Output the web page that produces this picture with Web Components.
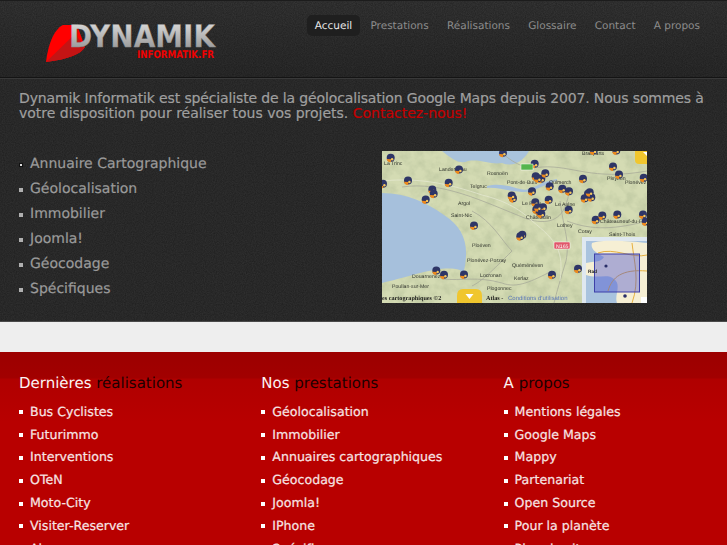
<!DOCTYPE html>
<html lang="fr">
<head>
<meta charset="utf-8">
<title>Dynamik Informatik</title>
<style>
  html, body { margin: 0; padding: 0; height: 100%; overflow: hidden; }
  body { background: #eeeeee; font-family: "DejaVu Sans", sans-serif; text-rendering: geometricPrecision; }
</style>
</head>
<body>

<site-header>
  <nav-link current>Accueil</nav-link>
  <nav-link>Prestations</nav-link>
  <nav-link>Réalisations</nav-link>
  <nav-link>Glossaire</nav-link>
  <nav-link>Contact</nav-link>
  <nav-link>A propos</nav-link>
</site-header>

<hero-panel>
  <span slot="intro">Dynamik Informatik est spécialiste de la géolocalisation Google Maps depuis 2007. Nous sommes à<br><span style="letter-spacing:-.01px">votre disposition pour réaliser tous vos projets. <a style="color:#c40000;text-decoration:none" href="#">Contactez-nous!</a></span></span>
  <bullet-item tone="dark" dim>Annuaire Cartographique</bullet-item>
  <bullet-item tone="dark">Géolocalisation</bullet-item>
  <bullet-item tone="dark">Immobilier</bullet-item>
  <bullet-item tone="dark">Joomla!</bullet-item>
  <bullet-item tone="dark">Géocodage</bullet-item>
  <bullet-item tone="dark">Spécifiques</bullet-item>
  <map-preview slot="map"></map-preview>
</hero-panel>

<site-footer>
  <footer-column first="Dernières" rest="réalisations">
    <bullet-item>Bus Cyclistes</bullet-item>
    <bullet-item>Futurimmo</bullet-item>
    <bullet-item>Interventions</bullet-item>
    <bullet-item>OTeN</bullet-item>
    <bullet-item>Moto-City</bullet-item>
    <bullet-item>Visiter-Reserver</bullet-item>
    <bullet-item>Alarme</bullet-item>
  </footer-column>
  <footer-column first="Nos" rest="prestations">
    <bullet-item>Géolocalisation</bullet-item>
    <bullet-item>Immobilier</bullet-item>
    <bullet-item>Annuaires cartographiques</bullet-item>
    <bullet-item>Géocodage</bullet-item>
    <bullet-item>Joomla!</bullet-item>
    <bullet-item>IPhone</bullet-item>
    <bullet-item>Spécifiques</bullet-item>
  </footer-column>
  <footer-column first="A" rest="propos">
    <bullet-item>Mentions légales</bullet-item>
    <bullet-item>Google Maps</bullet-item>
    <bullet-item>Mappy</bullet-item>
    <bullet-item>Partenariat</bullet-item>
    <bullet-item>Open Source</bullet-item>
    <bullet-item>Pour la planète</bullet-item>
    <bullet-item>Plan du site</bullet-item>
  </footer-column>
</site-footer>

<script>
// grain of the dark panels, vector only
const NOISE = `url("data:image/svg+xml,%3Csvg xmlns='http://www.w3.org/2000/svg' width='200' height='200'%3E%3Cfilter id='n'%3E%3CfeTurbulence type='fractalNoise' baseFrequency='.9' numOctaves='2'/%3E%3CfeColorMatrix values='0 0 0 0 0 0 0 0 0 0 0 0 0 0 0 0 0 0 .45 -.1'/%3E%3C/filter%3E%3Crect width='200' height='200' filter='url(%23n)'/%3E%3C/svg%3E")`;

class SiteHeader extends HTMLElement {
  constructor() {
    super();
    this.attachShadow({mode: "open"});
  }
  connectedCallback() {
    this.shadowRoot.innerHTML = `
    <style>
      :host {
        display: flex;
        justify-content: space-between;
        height: 78px;
        box-sizing: border-box;
        border-top: 1px solid #1c1c1c;
        border-bottom: 1px solid #141414;
        background: ${NOISE}, linear-gradient(#343434, #2a2a2a);
      }
      .logo { margin: 17px 0 0 45px; }
      nav { display: flex; align-items: flex-start; gap: 2.200px; padding: 14px 19px 0 0; }
    </style>
    <div class="logo">
      <svg width="172" height="47" viewBox="0 0 172 47">
        <defs>
          <linearGradient id="metal" x1="0" y1="0" x2="0" y2="1">
            <stop offset="0" stop-color="#e2e2e2"/>
            <stop offset="1" stop-color="#8c8c8c"/>
          </linearGradient>
        </defs>
        <path d="M1 44 C3 28 8 12 18 7 L32 7 L40 29 C36 36 24 41 1 44 Z" fill="#ff0000"/>
        <path d="M1 44 L30 16 L40 29 C36 36 24 41 1 44 Z" fill="#c41414"/>
        <text x="24" y="28.500" font-family="'DejaVu Sans', sans-serif" font-weight="700" font-size="31" textLength="146" lengthAdjust="spacingAndGlyphs" fill="url(#metal)" stroke="#8a8a8a" stroke-width=".3">DYNAMIK</text>
        <text x="92" y="40" font-family="'DejaVu Sans', sans-serif" font-weight="700" font-size="10.500" textLength="77" lengthAdjust="spacingAndGlyphs" fill="#f00000">INFORMATIK.FR</text>
      </svg>
    </div>
    <nav><slot></slot></nav>`;
  }
}
customElements.define("site-header", SiteHeader);

class NavLink extends HTMLElement {
  constructor() {
    super();
    this.attachShadow({mode: "open"});
    this.shadowRoot.innerHTML = `
    <style>
      :host {
        display: block;
        padding: 0 8px;
        height: 21px;
        line-height: 23px;
        font-size: 10.5px;
        color: #8c8c8c;
        border-radius: 5px;
      }
      :host([current]) { background: #1f1f1f; color: #e8e8e8; }
    </style>
    <slot></slot>`;
  }
}
customElements.define("nav-link", NavLink);

class BulletItem extends HTMLElement {
  constructor() {
    super();
    this.attachShadow({mode: "open"});
    this.shadowRoot.innerHTML = `
    <style>
      :host {
        display: flex;
        align-items: center;
        height: 22.800px;
        font-size: 12.6px;
        color: #f7e4e4;
        -webkit-text-stroke: .2px;
      }
      :host([tone="dark"]) { height: 25px; font-size: 14px; color: #9a9a9a; }
      i { width: 4px; height: 4px; margin: 2px 7px 0 0; background: #fff; flex: none; }
      :host([tone="dark"]) i { background: #b0b0b0; }
      :host([dim]) i { width: 2px; height: 2px; margin: 2px 8px 0 1px; background: #ddd; box-shadow: 0 0 0 1px #111; }
    </style>
    <i></i><span><slot></slot></span>`;
  }
}
customElements.define("bullet-item", BulletItem);

class HeroPanel extends HTMLElement {
  constructor() {
    super();
    this.attachShadow({mode: "open"});
    this.shadowRoot.innerHTML = `
    <style>
      :host {
        display: block;
        height: 244px;
        box-sizing: border-box;
        padding: 12px 19px 0;
        background: ${NOISE}, #2e2e2e;
        border-top: 1px solid #383838;
        border-bottom: 1px solid #4a4a4a;
      }
      p { margin: 0; font-size: 14px; line-height: 15px; color: #9f9f9f; letter-spacing: -.14px; white-space: nowrap; -webkit-text-stroke: .2px; text-rendering: auto; }
      .cols { display: grid; grid-template-columns: 363px 265px; margin-top: 30px; }
    </style>
    <p><slot name="intro"></slot></p>
    <div class="cols">
      <div><slot></slot></div>
      <slot name="map"></slot>
    </div>`;
  }
}
customElements.define("hero-panel", HeroPanel);

class MapPreview extends HTMLElement {
  constructor() {
    super();
    this.attachShadow({mode: "open"});
  }
  connectedCallback() {
    // positions read off the reference, in 3x zoom coordinates
    const pins = [[63,57],[400,42],[115,125],[237,132],[268,92],[188,152],[192,165],[168,182],[40,135],[430,178],[426,170],[313,260],[458,288],[452,292],[495,75],[498,112],[515,120],[527,103],[505,118],[487,157],[540,142],[578,150],[598,157],[537,183],[497,190],[597,213],[500,212],[510,220],[520,205],[515,225],[505,205],[640,120],[730,83],[748,107],[822,117],[655,165],[645,178],[665,175],[660,160],[678,243],[698,230],[743,227],[820,227],[828,248],[200,395],[223,408],[283,407],[547,408],[625,390],[672,35],[740,35]];
    const x = v => ((v - 37) / 3).toFixed(1), y = v => ((v - 35) / 3).toFixed(1);
    const pinSvg = pins.map(p => `<g transform="translate(${x(p[0])} ${y(p[1])})"><circle r="4" cy="-.5" fill="#2e3566"/><path d="M-4 .8 A4 4 0 0 0 0 4 L.5 1 Z" fill="#ee8a1e"/><circle r="1.200" cx="1.400" cy="1" fill="#f4c860"/></g>`).join("");
    const labels = [["La Trinc",2,14],["Landerneau",57,20],["Rosnoën",105,24],["Pont-de-Buis",125,33],["Quimerch",167,33],["Telgruc",88,37],["Argol",76,54],["Saint-Nic",69,66],["Lothey",175,76],["Le Faou",140,54],["Le Aulne",173,55],["Châteaulin",144,68],["Ploéven",90,96],["Plonévez-Porzay",85,111],["Quéménéven",130,116],["Locronan",98,126],["Kerlaz",132,129],["Plogonnec",105,139],["Douarnenez",30,127],["Poullan-sur-Mer",10,137],["Brasparts",200,4],["Pleyben",225,29],["Châteauneuf-du-F",218,72],["Saint-Thois",227,85],["Coray",196,82],["Plonévez",243,33]];
    const labelSvg = labels.map(l => `<text x="${l[1]}" y="${l[2]}">${l[0]}</text>`).join("");
    this.shadowRoot.innerHTML = `
    <style>
      :host { display: block; width: 265px; height: 152px; }
      svg { display: block; }
      .labels { font: 5.200px "Liberation Sans", sans-serif; fill: #30342c; }
      .copy { font: 700 6.200px "Liberation Serif", serif; fill: #232320; }
    </style>
    <svg width="265" height="152" viewBox="0 0 265 152">
      <defs>
        <filter id="soft" x="0" y="0" width="100%" height="100%"><feGaussianBlur stdDeviation=".4"/></filter>
        <filter id="relief" x="0" y="0" width="100%" height="100%">
          <feTurbulence type="fractalNoise" baseFrequency=".09" numOctaves="4" seed="7"/>
          <feColorMatrix values="0 0 0 0 .52  0 0 0 0 .58  0 0 0 0 .36  1.800 0 0 0 -.66"/>
        </filter>
      </defs>
      <g filter="url(#soft)">
        <rect width="265" height="152" fill="#d4dbb3"/>
        <rect width="265" height="152" filter="url(#relief)"/>
        <!-- coast and sea -->
        <path d="M0 42 C25 42 45 52 62 64 C78 74 85 88 84 105 C83 120 80 130 78 119 C60 114 40 122 0 132 Z" fill="#a6c0dc"/>
        <path d="M60 0 C70 8 78 14 86 10 C100 8 108 14 120 12 C130 16 140 12 147 0 Z" fill="#a9c3dc"/>
        <path d="M105 35 C125 30 140 42 146 38 C155 36 160 30 175 28 L175 30 C160 34 150 42 140 41 C125 40 115 36 105 37 Z" fill="#a6c0dc"/>
        <!-- roads -->
        <g fill="none" stroke="#a8ab99" stroke-width=".8">
          <path d="M120 2 C135 15 145 18 160 16 C190 14 210 30 265 20"/>
          <path d="M20 36 C60 30 100 50 145 68 C165 74 180 70 185 50 C190 38 180 28 170 30"/>
          <path d="M178 50 C182 80 188 90 184 110 C178 130 175 140 172 152"/>
          <path d="M90 60 C110 70 120 90 130 100 C110 120 100 130 90 135"/>
          <path d="M60 128 C80 130 95 125 120 132 C135 138 150 130 170 120"/>
          <path d="M185 70 C210 80 235 78 265 70"/>
        </g>
        <g fill="none" stroke="#e6e9d4" stroke-width=".7">
          <path d="M0 30 C40 26 70 34 100 44 C125 50 140 60 150 70"/>
          <path d="M150 70 C175 90 182 100 178 130"/>
        </g>
        <g class="labels">${labelSvg}</g>
        ${pinSvg}
        <!-- road signs -->
        <rect x="139" y="13" width="12" height="6" fill="#55b54d" stroke="#fff" stroke-width=".5"/>
        <rect x="172" y="91" width="16" height="7" rx="1" fill="#e0566a" stroke="#fff" stroke-width=".5"/>
        <text x="174" y="96.600" font-family="Liberation Sans, sans-serif" font-size="5.200" fill="#fff">N165</text>
        <!-- yellow tabs -->
        <path d="M253 0 H265 V13 H257 Q253 13 253 9 Z" fill="#f0c62e"/>
        <path d="M261 1 L265 1 L265 5 Z" fill="#fff"/>
        <path d="M75 152 V145 Q75 138 81 138 H94 Q100 138 100 145 V152 Z" fill="#f0c62e"/>
        <path d="M83.500 143 H91.500 L87.500 148 Z" fill="#fff"/>
        <!-- overview inset -->
        <g>
          <rect x="200" y="86" width="65" height="66" fill="#dfe8f0"/>
          <rect x="204" y="90" width="61" height="62" fill="#a9c3de"/>
          <path d="M210 92 C220 88 250 90 265 92 V152 H235 C232 144 240 134 232 128 C226 122 216 128 204 124 V112 C212 110 218 112 222 106 C214 102 208 98 210 92 Z" fill="#f6efd4"/>
          <path d="M216 102 C232 96 250 108 265 104 M226 140 C230 126 240 118 265 120 M250 92 C252 110 258 130 250 152" fill="none" stroke="#e6b040" stroke-width="1"/>
          <rect x="212.500" y="103" width="45" height="38" fill="#4a50d0" fill-opacity=".42" stroke="#3c3fa8" stroke-width="1"/>
          <circle cx="224" cy="115" r="1.600" fill="#2a2f68"/>
          <circle cx="243" cy="145" r="1.800" fill="#2a2f68"/>
          <text x="206" y="122" font-family="Liberation Sans, sans-serif" font-size="4.800" font-weight="700" fill="#222">Rad</text>
          <rect x="259" y="146" width="6" height="6" fill="#fff"/>
        </g>
        <text class="copy" x="0" y="149">es cartographiques ©2</text>
        <text class="copy" x="104" y="149">Atlas -</text>
        <text x="126" y="149" font-family="Liberation Sans, sans-serif" font-size="6" fill="#5b78b8">Conditions d'utilisation</text>
      </g>
    </svg>`;
  }
}
customElements.define("map-preview", MapPreview);

class SiteFooter extends HTMLElement {
  constructor() {
    super();
    this.attachShadow({mode: "open"});
    this.shadowRoot.innerHTML = `
    <style>
      :host {
        display: grid;
        grid-template-columns: repeat(3, 242.300px);
        margin-top: 30px;
        padding: 22px 0 0 19px;
        height: 300px;
        box-sizing: border-box;
        background: linear-gradient(#9c0000 0, #a20000 26px, #b00000 27px, #b80000 70px);
      }
    </style>
    <slot></slot>`;
  }
}
customElements.define("site-footer", SiteFooter);

class FooterColumn extends HTMLElement {
  constructor() {
    super();
    this.attachShadow({mode: "open"});
  }
  connectedCallback() {
    this.shadowRoot.innerHTML = `
    <style>
      :host { display: block; }
      h3 { margin: 0 0 8px; font-size: 15px; line-height: 18px; font-weight: 400; color: #fbf4f4; }
      h3 span { color: #1c0000; }
    </style>
    <h3>${this.getAttribute("first")} <span>${this.getAttribute("rest")}</span></h3>
    <slot></slot>`;
  }
}
customElements.define("footer-column", FooterColumn);
</script>
</body>
</html>
